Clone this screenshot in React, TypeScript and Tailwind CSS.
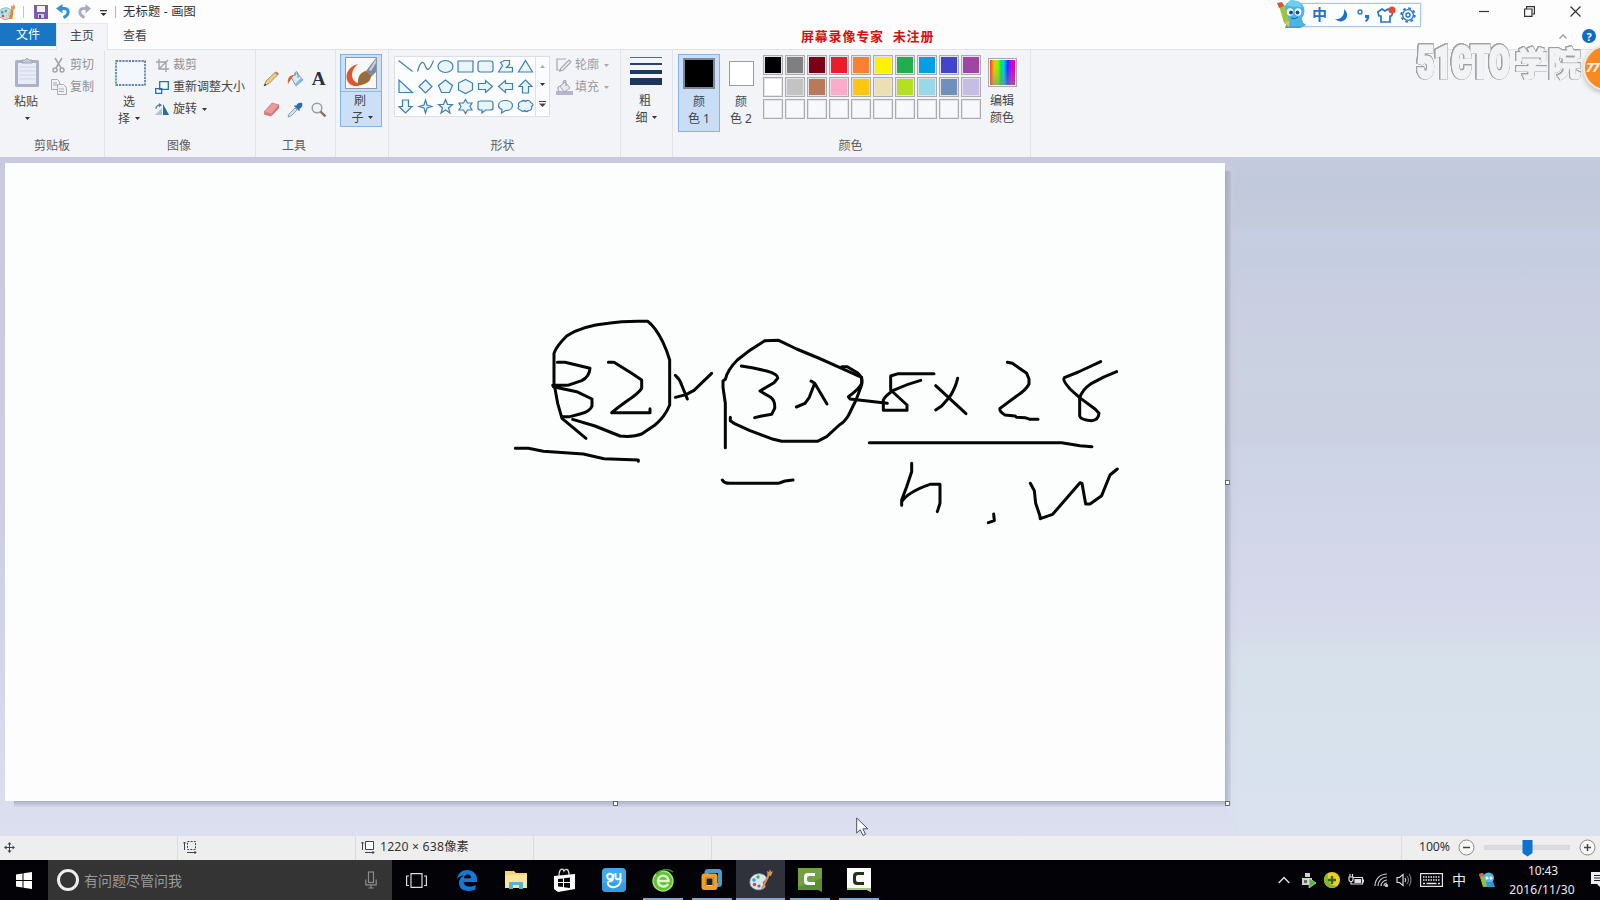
import type { ReactNode } from 'react';

const BLUE = '#3f7fae';

function Caret({ className = '', color = '#333' }: { className?: string; color?: string }) {
  return (
    <svg width="5" height="3" viewBox="0 0 5 3" className={`shrink-0 ${className}`}>
      <path d="M0 0h5L2.5 3z" fill={color} />
    </svg>
  );
}

function Group({ label, className, children, labelClass = '' }: { label: string; className: string; labelClass?: string; children?: ReactNode }) {
  return (
    <section className={`flex shrink-0 flex-col border-r border-[#e2e3e8] ${className}`}>
      <div className="flex h-[86px] items-start">{children}</div>
      <div className={`h-5 text-center leading-5 text-[#5c5c60] ${labelClass}`}>{label}</div>
    </section>
  );
}

function PaletteIcon({ size }: { size: number }) {
  return (
    <svg width={size} height={size} viewBox="0 0 24 24" className="shrink-0">
      <path d="M1 14C1 8 7 5 12 6c5 1 6 4 5 6-1 1-3 1-3 3s3 2 2 4c-2 3-8 4-12 1-2-1-3-3-3-6z" fill="#d9e6ee" stroke="#8fb0c2" strokeWidth=".8" />
      <circle cx="5" cy="12" r="1.8" fill="#3f9be0" />
      <circle cx="9" cy="9" r="1.7" fill="#4bb04f" />
      <circle cx="5.5" cy="16.500" r="1.8" fill="#d5453a" />
      <circle cx="10" cy="18" r="1.600" fill="#8854b5" />
      <path d="M12 21 19 6l2 1-7 14z" fill="#e08a3c" />
      <path d="M18.500 7 18 3l2 1 1-3 1 3 2-1-2 5z" fill="#c99b55" />
    </svg>
  );
}

function TitleBar() {
  return (
    <div className="flex h-[23px] items-center">
      <svg width="16" height="18" viewBox="2 0 22 23" className="shrink-0">
        <path d="M0 14C1 8 7 5 12 6c5 1 6 4 5 6-1 1-3 1-3 3s3 2 2 4c-2 3-8 4-12 1-2-1-4-3-4-6z" fill="#c6dde6" stroke="#6f9cb0" />
        <circle cx="5" cy="12" r="1.800" fill="#3f9be0" />
        <circle cx="10" cy="10" r="1.700" fill="#4bb04f" />
        <circle cx="6" cy="17" r="1.800" fill="#d5453a" />
        <path d="M14 21 18 6h3l-2 15z" fill="#e58a33" />
        <path d="M17 7V2l2 2 2-3 2 3-1 4z" fill="#d9a24f" />
      </svg>
      <div className="ml-[7px] h-3 w-px bg-[#c2c2c6]" />
      <svg width="14" height="14" viewBox="0 0 14 14" className="ml-[10px] shrink-0">
        <path d="M0 0h14v14H1l-1-1z" fill="#7a5da8" />
        <path d="M3 1h8v6H3z" fill="#f3f0f8" />
        <path d="M4 9h6v4H4z" fill="#d5cbe6" />
        <path d="M5 10h2v3H5z" fill="#5b4189" />
      </svg>
      <svg width="15" height="15" viewBox="0 0 15 15" className="ml-2 shrink-0" fill="none">
        <path d="M4 4.500h4.500c3 0 4 2 3.500 4.500-.4 2-2 3.500-4.500 4.500" stroke="#3a8fd0" strokeWidth="3.200" />
        <path d="M6.500 0 0 4.500 6.500 9.500z" fill="#3a8fd0" />
      </svg>
      <svg width="15" height="15" viewBox="0 0 15 15" className="ml-[6px] shrink-0" fill="none">
        <path d="M11 4.500H6.500C3.500 4.500 2.500 6.500 3 9c.4 2 2 3.500 4.500 4.500" stroke="#aaadbb" strokeWidth="3" />
        <path d="m8.500 0 5.500 4.500-5.500 5z" fill="#aaadbb" />
      </svg>
      <svg width="7" height="7" viewBox="0 0 7 7" className="ml-[8px] mt-1 shrink-0">
        <path d="M0 0h7v1.300H0zM.5 3h6L3.500 6z" fill="#333" />
      </svg>
      <div className="ml-[8px] h-3 w-px bg-[#b5b5b9]" />
      <span className="ml-[7px] mt-px whitespace-pre text-[12.3px] tracking-[0.15px] text-[#333]">无标题 - 画图</span>
      <div className="ml-auto flex items-center">
        <svg width="10" height="11" viewBox="0 0 10 11" className="mr-[35px]"><path d="M0 5.500h10" stroke="#333" strokeWidth="1.200" /></svg>
        <svg width="11" height="11" viewBox="0 0 11 11" className="mr-[35px]" fill="none" stroke="#333" strokeWidth="1.200">
          <path d="M.6 3h7.400v7.400H.6zM2.600 3V.6h7.800V8H8" />
        </svg>
        <svg width="11" height="11" viewBox="0 0 11 11" className="mr-[19px]" fill="none" stroke="#333" strokeWidth="1.200">
          <path d="m.5.5 10 10m0-10-10 10" />
        </svg>
      </div>
    </div>
  );
}

function Tabs() {
  return (
    <div className="flex h-[27px] border-b border-[#e1e2e6]">
      <div className="h-[23px] w-14 bg-[#1a75c4] text-center leading-[23px] text-white">文件</div>
      <div className="-mb-px flex w-[52px] justify-center border-x border-t border-[#e6e7ea] bg-[#f4f5f8] leading-[24px] text-[#444]">主页</div>
      <div className="w-[54px] text-center leading-[25px] text-[#444]">查看</div>
      <div className="ml-auto flex items-center">
        <svg width="8" height="5" viewBox="0 0 8 5" className="mr-[15px]" fill="none"><path d="M.5 4.500 4 1l3.500 3.500" stroke="#999" strokeWidth="1.300" /></svg>
        <div className="mr-1 flex size-[14px] items-center justify-center rounded-full bg-[#0f6cc0] text-[11px] font-bold leading-none text-white">?</div>
      </div>
    </div>
  );
}

function ClipboardGroup() {
  return (
    <Group label="剪贴板" className="w-[105px]">
      <div className="flex w-[51px] flex-col items-center pt-[7px] pl-[3px]">
        <svg width="26" height="32" viewBox="0 0 26 32">
          <rect x="1" y="3" width="24" height="27" rx="1.500" fill="#aab2cb" />
          <rect x="4" y="6" width="18" height="21" fill="#e6ebf6" />
          <path d="M5 10h16M5 14h16M5 18h16M5 22h16" stroke="#cfd7e8" />
          <path d="M8 6V3h3l2-2 2 2h3v3z" fill="#c6cad6" stroke="#8f96ab" strokeWidth=".8" />
        </svg>
        <span className="mt-1 mr-[2px] leading-[18px]">粘贴</span>
        <Caret className="mt-[6px]" />
      </div>
      <div className="flex flex-col pt-1 text-[#909094]">
        <div className="flex h-[22px] items-center">
          <svg width="16" height="16" viewBox="0 0 16 16" fill="none" stroke="#a1a4ae" strokeWidth="1.500" className="mr-[3px]">
            <path d="m4 1 6 10M11 1 5 11" /><circle cx="4" cy="13" r="2" /><circle cx="11" cy="13" r="2" />
          </svg>剪切
        </div>
        <div className="flex h-[22px] items-center">
          <svg width="16" height="16" viewBox="0 0 16 16" fill="#f0f1f5" stroke="#a9acb6" className="mr-[3px]">
            <path d="M.5.500h6l2 2v8h-8zM2 4h4M2 6h4" /><path d="M6.500 5.500h6l3 3v7h-9zM8 10h5M8 12.500h5" />
          </svg>复制
        </div>
      </div>
    </Group>
  );
}

function ImageGroup() {
  return (
    <Group label="图像" className="w-[151px]" labelClass="pr-[2px]">
      <div className="flex w-[50px] flex-col items-center pt-[10px]">
        <svg width="31" height="26" viewBox="0 0 31 26"><rect x="1" y="1" width="29" height="24" fill="#f2f7fc" stroke="#35669c" strokeWidth="1.400" strokeDasharray="2.200 1" /></svg>
        <span className="mt-2 mr-[2px] leading-4">选</span>
        <span className="mr-[2px] flex items-center gap-[5px] leading-[17px]">择<Caret /></span>
      </div>
      <div className="flex flex-col pt-1">
        <div className="flex h-[22px] items-center text-[#909094]">
          <svg width="13" height="13" viewBox="0 0 13 13" fill="none" stroke="#a1a4ae" strokeWidth="1.400" className="mr-1 ml-[1px]"><path d="M3 0v10h10M0 3h10v10M3 10l9-9" /></svg>裁剪
        </div>
        <div className="flex h-[22px] items-center">
          <svg width="14" height="13" viewBox="0 0 14 13" fill="#f4f8fc" stroke="#2d6da8" strokeWidth="1.300" className="mr-1"><path d="M4.700.7h8.600v7.600H4.700zM.7 7.700h6v4.600h-6z" /></svg>重新调整大小
        </div>
        <div className="flex h-[22px] items-center">
          <svg width="14" height="13" viewBox="0 0 14 13" className="mr-1"><path d="M8 1v11h6z" fill="#2a6ca6" /><path d="M7 5v7H0z" fill="#a9c5dc" /><path d="M1 6c0-3 2-4 4-4" fill="none" stroke="#4383b7" strokeWidth="1.300" /><path d="m4 0 3 2-3 2.500z" fill="#4383b7" /></svg>旋转<Caret className="ml-[5px]" />
        </div>
      </div>
    </Group>
  );
}

function ToolsGroup() {
  return (
    <Group label="工具" className="w-[80px]" labelClass="pr-[3px]">
      <div className="grid grid-cols-[24px_24px_24px] grid-rows-[31px_31px] place-items-center pt-[13px] pl-[3px]">
        <svg width="16" height="16" viewBox="0 0 16 16"><path d="m1 15 2-5L12 1.500l2.500 2.500L6 12.500z" fill="#e8cf80" stroke="#9b7b45" strokeWidth=".8" /><path d="m12 1.500 1.500-1L16 3l-1.500 1z" fill="#c46a63" /><path d="m1 15 1-2.500L3.500 14z" fill="#333" /></svg>
        <svg width="17" height="16" viewBox="0 0 17 16"><path d="m4 6 6-4 6 7-7 6z" fill="#dce8f3" stroke="#7f9db8" /><path d="M8 5c-1-5 3-6 3-1v3" fill="none" stroke="#6c88a2" /><path d="M1 13C0 8 2 4 7 4L4 8z" fill="#d9623b" /><path d="m9 15 7-6-2-2-6 6z" fill="#8bb7dd" /></svg>
        <span className="pr-px font-['Liberation_Serif',serif] text-[19px] font-bold leading-none text-[#243044]">A</span>
        <svg width="17" height="15" viewBox="0 0 17 15"><path d="M1 10 9 1l7 2-7 9z" fill="#eb9c9a" stroke="#c56a69" strokeWidth=".7" /><path d="m1 10 8 2-1 2.500-7-2z" fill="#d87c7a" /><path d="m9 12 7-9v3l-8 8.500z" fill="#c96967" /></svg>
        <svg width="16" height="16" viewBox="0 0 16 16"><path d="m1 15 1-3 6-6 2 2-6 6z" fill="#d5e2ee" stroke="#7890a6" strokeWidth=".8" /><path d="m7 4 5 5 1-1-1-1c3-1 4-4 3-6-2-1-5 0-6 3L8 3z" fill="#2d6cab" /></svg>
        <svg width="16" height="16" viewBox="0 0 16 16" fill="none"><circle cx="6" cy="6" r="4.800" fill="#edf3f8" stroke="#9c9da0" strokeWidth="1.500" /><path d="m9.500 9.500 5 5" stroke="#8b6f58" strokeWidth="2.400" /></svg>
      </div>
    </Group>
  );
}

function BrushGroup() {
  return (
    <Group label="" className="w-[53px]">
      <div className="mt-1 ml-[4px] flex h-[73px] w-[42px] flex-col items-center border border-[#7fb2e5] bg-[#cbdff6]">
        <div className="flex h-[37px] w-full justify-center border-b border-[#8dbbe8] pt-[2px]">
          <svg width="32" height="32" viewBox="0 0 32 32">
            <rect x=".5" y=".5" width="31" height="31" fill="#faf8f6" stroke="#8f99a5" />
            <path d="M13 7C4 9 0 17 2 23c2 6 10 8 16 4-6 0-11-3-11-9 0-4 2-8 6-11z" fill="#e0562b" />
            <path d="M21 14 31 1v14l-5 5z" fill="#7d8aa0" />
            <path d="m24 13 7-11v4l-5 8z" fill="#c8d0dc" />
            <path d="M13 28c-1-7 2-13 8-14l5 5c0 6-6 9-13 9z" fill="#9c6b3c" />
          </svg>
        </div>
        <span className="mt-[1px] mr-[2px] leading-4">刷</span>
        <span className="flex items-center gap-1 pl-[2px] leading-[17px]">子<Caret /></span>
      </div>
    </Group>
  );
}

const shapes = [
  'M1 2 15 13',
  'M0 13C3 2 6 2 8 8s5 2 8-6',
  'M8 2c4 0 7.500 2.500 7.500 6S12 14 8 14 .5 11.500.5 8 4 2 8 2z',
  'M.5 2.500h15v11H.5z',
  'M3 2.500h10q2.500 0 2.500 2.500v6q0 2.500-2.500 2.500H3Q.5 13.500.5 11V5Q.5 2.500 3 2.500z',
  'M1 13.500 5 7 3 4l4-2h5v4l-3 3h6v4.500z',
  'M8 2l7 11.500H1z',
  'M1.500 1.500V14H15z',
  'M8 1.500 14.500 8 8 14.500 1.500 8z',
  'M8 1.500 15 7l-3 7H4L1 7z',
  'M8 1l7 3.500v7L8 15l-7-3.500v-7z',
  'M1 5h7V2l7 6-7 6v-3H1z',
  'M15 5H8V2L1 8l7 6v-3h7z',
  'M5 14.500V8H1.500L8 1.500 14.500 8H11v6.500z',
  'M5 1.500V8H1.500L8 14.500 14.500 8H11V1.500z',
  'M8 1.500 9.500 6.500 14.500 8 9.500 9.500 8 14.500 6.500 9.500 1.500 8 6.500 6.500z',
  'm8 1 2 5h5l-4 3.500 1.500 5L8 11.500l-4.500 3L5 9.500 1 6h5z',
  'M8 1l2 3.500h4.500L12.500 8l2 3.500H10L8 15l-2-3.500H1.500L3.500 8l-2-3.500H6z',
  'M3 2.500h10q2.500 0 2.500 2v5q0 2-2.500 2H8l-3.500 3v-3H3q-2.500 0-2.500-2v-5q0-2 2.500-2z',
  'M8 2c4 0 7 2 7 5s-3 5-7 5l-4 2.500.5-3.500C2 10 1 9 1 7c0-3 3-5 7-5z',
  'M4 3c2-2 3-1 4 0 2-2 5-1 5 1 3 1 3 3 1 4 1 3-1 4-3 4-2 2-3 1-4 0-2 2-3 0-4-.500C0 11 0 9 1.500 8 0 6 1 3.500 4 3z',
];

function ShapesGroup() {
  return (
    <Group label="形状" className="w-[232px]" labelClass="pr-[4px]">
      <div className="mt-[6px] ml-[5px] flex h-[61px] w-[156px] border border-[#dcdee4] bg-[#fbfcfe]">
        <div className="grid w-[140px] grid-cols-7 grid-rows-3 place-items-center">
          {shapes.map((d) => (
            <svg key={d} width="17" height="17" viewBox="-.5 -.5 17 17" fill={d.startsWith('M1 2 15') || d.startsWith('M0 13') ? 'none' : '#e9f4fb'} stroke={BLUE} strokeWidth="1.200"><path d={d} /></svg>
          ))}
        </div>
        <div className="flex flex-1 flex-col items-center justify-around border-l border-[#dfe1e6]">
          <svg width="5" height="3" viewBox="0 0 5 3"><path d="M0 3h5L2.500 0z" fill="#aaa" /></svg>
          <Caret />
          <svg width="7" height="7" viewBox="0 0 7 7"><path d="M0 0h7v1H0zM0 2.500h7L3.500 6z" fill="#444" /></svg>
        </div>
      </div>
      <div className="flex flex-col pt-1 pl-[6px] text-[#9b9ba0]">
        <div className="flex h-[22px] items-center">
          <svg width="16" height="14" viewBox="0 0 16 14" fill="none" stroke="#a3a6b0" strokeWidth="1.200" className="mr-[3px]"><path d="M10 1H1v11h4M4 13l1-3 8-8 2 2-8 8z" /></svg>轮廓<Caret className="ml-[5px]" color="#aaa" />
        </div>
        <div className="flex h-[22px] items-center">
          <svg width="17" height="15" viewBox="0 0 17 15" className="mr-[2px]"><path d="M0 11h17v4H0z" fill="#b3b2d0" /><path d="m4 6 5-4 5 6-6 4z" fill="#e6e7f0" stroke="#a3a6b8" /><path d="M7 4c0-4 3-5 3-1v3M3 11c-2-2-1-5 2-5" fill="none" stroke="#a3a6b8" strokeWidth="1.200" /></svg>填充<Caret className="ml-[5px]" color="#aaa" />
        </div>
      </div>
    </Group>
  );
}

const palette = [
  ['#000000', '#7f7f7f', '#7d0019', '#ec1c2c', '#fb8131', '#fbf200', '#24ad4e', '#059de3', '#4145c9', '#a045a3'],
  ['#ffffff', '#c3c3c3', '#b87a5a', '#fcacc9', '#fdc611', '#ecdfb2', '#b4e01f', '#99d8e8', '#7090bb', '#c6bde4'],
  Array.from({ length: 10 }, () => ''),
];

function ColorsGroup() {
  return (
    <Group label="颜色" className="w-[358px]" labelClass="pr-[2px]">
      <div className="mt-1 ml-[5px] flex h-[78px] w-[42px] flex-col items-center border border-[#84b5e6] bg-[#c9ddf6] pt-[3px]">
        <div className="h-[31px] w-8 border-2 border-[#7a8898] bg-black" />
        <span className="mt-[5px] leading-4">颜</span>
        <span className="leading-[17px]">色 1</span>
      </div>
      <div className="flex w-[42px] flex-col items-center pt-[11px]">
        <div className="size-[25px] border border-[#9b9b9f] bg-white" />
        <span className="mt-2 leading-4">颜</span>
        <span className="leading-[17px]">色 2</span>
      </div>
      <div className="mt-[5px] ml-[1px] grid grid-cols-[repeat(10,20px)] gap-[2px]">
        {palette.flat().map((c, i) => (
          <div key={i} className="h-5 border border-[#acacb0] bg-[#e4e4e8] p-px">
            <div className="size-full" style={{ backgroundColor: c || '#f7f8fb' }} />
          </div>
        ))}
      </div>
      <div className="ml-[6px] flex w-[30px] flex-col items-center pt-2">
        <div className="size-[29px] border border-[#a9a9ad] bg-white p-px">
          <div className="size-full bg-[linear-gradient(to_bottom,transparent_30%,#8888),linear-gradient(to_right,#f33,#fb0_15%,#7f0_32%,#0d6_45%,#0cf_55%,#23f_70%,#c0f_85%,#f06)]" />
        </div>
        <span className="mt-[6px] whitespace-nowrap leading-4">编辑</span>
        <span className="whitespace-nowrap leading-[17px]">颜色</span>
      </div>
    </Group>
  );
}

function Ribbon() {
  return (
    <div className="flex h-[107px] bg-[#f3f4f8] text-[#444]">
      <ClipboardGroup />
      <ImageGroup />
      <ToolsGroup />
      <BrushGroup />
      <ShapesGroup />
      <Group label="" className="w-[52px]">
        <div className="flex w-[50px] flex-col items-center pt-[7px]">
          <div className="flex w-8 flex-col">
            <div className="h-px bg-[#5a6a85]" />
            <div className="mt-[5px] h-[2px] bg-[#2b4268]" />
            <div className="mt-[5px] h-1 bg-[#1f3860]" />
            <div className="mt-1 h-[7px] bg-[#1c355e]" />
          </div>
          <span className="mt-2 mr-[2px] leading-4">粗</span>
          <span className="flex items-center gap-1 leading-[17px]">细<Caret /></span>
        </div>
      </Group>
      <ColorsGroup />
    </div>
  );
}

function Handle({ className }: { className: string }) {
  return <div className={`absolute h-[5px] w-[5px] border border-[#5b6377] bg-white ${className}`} />;
}

function Workspace() {
  return (
    <div className="h-[678px] bg-[linear-gradient(to_bottom,#c3cadd_0%,#c1c9dc_5%,#c4cbdb_10%,#c6cfe1_11%,#c5cee1_16%,#c9cee1_18%,#cbcfe1_26%,#cad2e2_27%,#ccd1e1_42%,#cdd4e6_43%,#d3d7e9_60%,#d7daeb_70%,#d6dfea_72%,#d7e1ec_76%,#d9e2ee_100%)]">
      <div className="h-full w-[1238px] bg-[linear-gradient(to_bottom,#c8c9dc,#cccde1_50%,#dbdfef)] pt-[6px] pl-[5px] [mask-image:linear-gradient(to_right,#000_1228px,transparent)]">
        <div className="relative h-[638px] w-[1220px] bg-[linear-gradient(to_bottom,#fbfefd_70%,#fefdfe_76%)]">
          <svg width="1220" height="638" viewBox="5 163 1220 638" fill="none" stroke="#050505" strokeWidth="9" strokeLinecap="round" strokeLinejoin="round">
            <g transform="translate(500 300) scale(.33333)">
              <path d="M258 415 186 355 173 310 162 250V160Q168 140 200 108 245 78 325 70 370 62 443 64 465 80 488 125 500 150 509 180V315Q495 350 465 375L425 402Q400 412 360 408 320 392 285 378L218 358" />
              <path d="M172 187H195L270 205Q268 230 245 242L203 256H158M160 260 230 275 276 297V318Q270 335 240 342L210 350H186" />
              <path d="M325 187H342L395 220 425 240V265Q415 280 385 300 350 325 335 338H450V326" />
              <path d="M526 226Q540 238 545 255L562 297M526 292 558 284 582 271 635 220" />
              <path d="M676 443V310L669 262V243L676 238Q682 210 712 180 750 148 795 122L836 121 890 147Q960 175 1020 203L1085 232V255L1068 300 1046 345Q1035 365 1018 375L980 410 952 424H845L820 418 750 392 702 370 691 362V352" />
              <path d="M724 198 760 204 800 213Q835 222 833 235L822 248 780 273 812 292Q826 302 824 325L815 343 785 348 764 353" />
              <path d="M933 243 944 250 928 292 915 310 889 321M944 250 981 312" />
              <path d="M46 445H85L130 454 250 462 312 476 415 480V484M667 540Q672 550 690 550H835L855 543 879 540" />
            </g>
            <g transform="translate(830 340) scale(.33333)">
              <path d="M35 80H52L82 98Q98 112 96 128 90 145 55 170L60 177 172 190" />
              <path d="M312 101H205L182 108V150L231 195V211H160V180Q165 168 188 152 230 132 272 121" />
              <path d="M383 115Q376 145 358 172L335 198 317 210M317 137 408 221" />
              <path d="M532 67 547 70 590 100 597 117V132Q588 150 560 168L510 205Q507 215 525 225L555 228 560 232 585 233 600 238H624" />
              <path d="M812 65 745 96 703 113Q696 120 720 147L748 172 795 207 807 220Q805 240 785 242 752 240 749 228V175Q755 150 785 130 820 110 860 95" />
              <path d="M118 308H695L750 317 786 320" />
              <path d="M245 370V395L230 440 215 480V496M215 485Q235 455 300 433H330V490L322 515" />
              <path d="M491 522 493 542 475 548M601 430 613 452 617 490 629 525 631 536 668 523 750 428 756 430 767 492H780L815 467 840 405 862 387" />
            </g>
          </svg>
          <div className="absolute top-2 left-full h-[635px] w-[6px] bg-linear-to-r from-[#687290]/35 to-[#687290]/15" />
          <div className="absolute top-full left-[9px] h-[6px] w-[1211px] bg-linear-to-b from-[#606a8c]/40 to-[#606a8c]/5" />
          <Handle className="top-[317px] left-full" />
          <Handle className="top-full left-full" />
          <Handle className="top-full left-[608px]" />
        </div>
      </div>
    </div>
  );
}

function StatusBar() {
  return (
    <div className="flex h-[25px] border-t border-[#e0e0e6] bg-[#eeeeef] text-[#333]">
      <div className="flex w-[178px] items-center border-r border-[#dcdcde] pb-px pl-1">
        <svg width="11" height="11" viewBox="0 0 11 11"><path d="M5.500 1v9M1 5.500h9" stroke="#3b4358" /><path d="M5.500 0l2 2.500h-4zM5.500 11l2-2.500h-4zM0 5.500l2.500-2v4zM11 5.500l-2.500-2v4z" fill="#3b4358" /></svg>
      </div>
      <div className="flex w-[178px] items-center border-r border-[#dcdcde] pb-px pl-[5px]">
        <svg width="14" height="13" viewBox="0 0 14 13" fill="none" stroke="#3b4358"><path d="M1.500 1v8M0 2.500 1.500 1 3 2.500M4 11.500h9M11.500 10l1.500 1.500-1.500 1.500" /><path d="M4.500.500h8v8h-8z" strokeDasharray="2 1.200" /></svg>
      </div>
      <div className="flex w-[178px] items-center border-r border-[#dcdcde] pb-px pl-[5px]">
        <svg width="14" height="13" viewBox="0 0 14 13" fill="none" stroke="#3b4358"><path d="M1.500 1v8M0 2.500 1.500 1 3 2.500M4 11.500h9M11.500 10l1.500 1.500-1.500 1.500" /><path d="M4.500.500h8v8h-8z" fill="#fff" /></svg>
        <span className="ml-[5px] text-[12.3px] tracking-[0.15px]">1220 × 638像素</span>
      </div>
      <div className="w-[178px] border-r border-[#dcdcde]" />
      <div className="flex flex-1 items-center border-r border-[#dcdcde]" />
      <div className="flex w-[198px] items-center pb-px pl-[17px]">
        <span className="w-[33px] text-[12.3px] tracking-[-0.1px]">100%</span>
        <svg width="17" height="17" viewBox="0 0 17 17" className="ml-[6px]" fill="#f8f8f8" stroke="#888"><circle cx="8.500" cy="8.500" r="7.500" /><path d="M5 8.500h7" stroke="#444" strokeWidth="1.500" /></svg>
        <svg width="86" height="18" viewBox="0 0 86 18" className="ml-[9px]"><path d="M0 6.500h86v4H0z" fill="#dcdcde" stroke="#cfcfd2" strokeWidth=".6" /><path d="M38.500 1h10v13l-5 3.500-5-3.500z" fill="#0d74cd" /></svg>
        <svg width="17" height="17" viewBox="0 0 17 17" className="ml-[9px]" fill="#f8f8f8" stroke="#888"><circle cx="8.500" cy="8.500" r="7.500" /><path d="M5 8.500h7M8.500 5v7" stroke="#444" strokeWidth="1.500" /></svg>
      </div>
    </div>
  );
}

function Task({ children, running = false, active = false }: { children: ReactNode; running?: boolean; active?: boolean }) {
  return (
    <div className={`flex w-[49px] flex-col items-center ${active ? 'bg-[#30323b]' : ''}`}>
      <div className="flex h-[37px] items-center pt-[3px]">{children}</div>
      {running && <div className={`mt-auto h-[2px] bg-[#76a9dc] ${active ? 'w-full' : 'w-10'}`} />}
    </div>
  );
}

function Taskbar() {
  return (
    <div className="flex h-10 bg-[#020207] text-[#eee]">
      <div className="flex w-12 items-center justify-center">
        <svg width="16" height="17" viewBox="0 0 16 17" fill="#fff"><path d="M0 2.500 6.500 1.500V8H0zM7.500 1.300 16 0v8H7.500zM0 9h6.500v6.500L0 14.500zM7.500 9H16v8l-8.500-1.300z" /></svg>
      </div>
      <div className="flex w-[344px] items-center bg-[#343434] pl-[9px]">
        <div className="size-[22px] rounded-full border-[3px] border-[#eee]" />
        <span className="ml-[5px] text-[14px] text-[#9a9a9a]">有问题尽管问我</span>
        <svg width="12" height="18" viewBox="0 0 12 18" className="mr-[15px] ml-auto" fill="none" stroke="#8c8c8c" strokeWidth="1.200"><rect x="3.500" y="1" width="5" height="10.500" /><path d="M.8 8.500v5.300h10.400V8.500M6 14v3M3.500 17h5" /></svg>
      </div>
      <div className="flex pl-px">
        <Task>
          <svg width="21" height="15" viewBox="0 0 21 15" fill="none" stroke="#ddd" strokeWidth="1.200" className="mr-[2px]"><path d="M5 .6h11v13.800H5zM3 3H.6v9.500H3M18 3h2.400v9.500H18" /></svg>
        </Task>
        <Task>
          <svg width="20" height="21" viewBox="0 0 20 21"><path d="M0 9C1 3 5 0 10 0c6 0 10 4 10 9v3H6.500c.4 3 3 4.500 6 4.500 2.400 0 4-.5 6-1.500v4.200c-2 1.200-4.500 1.800-7.500 1.800-5.500 0-9-3.300-9-8.200C2 9.500 4 7 7 5.500 4.500 5.500 1.800 6.500 0 9zm6.800-.7H14C14 6 12.800 4.600 10.700 4.600 8.600 4.600 7 6 6.800 8.300z" fill="#1478d4" /></svg>
        </Task>
        <Task>
          <svg width="22" height="18" viewBox="0 0 22 18"><path d="M0 0h9l2 2h11v15H0z" fill="#f3d67a" /><path d="M0 4h22v13H0z" fill="#fae59c" /><path d="M4 18v-7h14v7h-4v-4H8v4z" fill="#58b3d1" /></svg>
        </Task>
        <Task>
          <svg width="21" height="24" viewBox="0 0 21 24"><path d="M0 8l21-2v15l-17 3-4-3z" fill="#fff" /><path d="M5 8C5 0 9 0 10 3c2-3 5-2 5 4" fill="none" stroke="#ddd" strokeWidth="1.300" /><path d="m4 11 5-.6V14H4zM10 10.300l6-.7V14h-6zM4 15h5v4l-5-.5zM10 15h6v5l-6-.8z" fill="#050508" /></svg>
        </Task>
        <Task>
          <svg width="24" height="24" viewBox="0 0 24 24"><rect width="24" height="24" rx="4" fill="#43a9ee" /><path d="M0 15h24v5a4 4 0 0 1-4 4H4a4 4 0 0 1-4-4z" fill="#278ed9" opacity=".5" /><g fill="none" stroke="#fff" strokeWidth="1.900"><circle cx="8" cy="8.500" r="2.800" /><path d="M10.800 6v5c0 2-2 2-4 2.500-3 2.500 1 6.500 6 5.500 4-1 6-4 6-8M13.500 5v4c0 3 5 3 5 0V5" /></g></svg>
        </Task>
        <Task running>
          <svg width="22" height="23" viewBox="0 0 22 23"><circle cx="11" cy="12" r="10" fill="#5fc32f" stroke="#a4e57f" strokeWidth="1.400" /><path d="M6 12h10.500C16 5 6 5 6 12c0 6 8 7 10 3" fill="none" stroke="#dff5cd" strokeWidth="2.500" /><path d="M4 5C10-1 17 0 21 3" fill="none" stroke="#3b8d21" strokeWidth="1.500" /></svg>
        </Task>
        <Task running>
          <svg width="21" height="22" viewBox="0 0 21 22" fill="none"><rect x="5.500" y="2" width="13.500" height="14" rx="1.500" stroke="#4b9fc7" strokeWidth="4" /><rect x="2.500" y="6.500" width="12" height="12.500" rx="1" fill="#1d2027" stroke="#ef9f2b" strokeWidth="4" /><path d="M5 9h7v7.500H5z" stroke="#f5c661" /></svg>
        </Task>
        <Task running active><PaletteIcon size={24} /></Task>
        <Task running>
          <svg width="24" height="24" viewBox="0 0 24 24"><path d="M0 0h24v24l-4-2H0z" fill="#5d8f2c" /><path d="M0 0h24v10L0 19z" fill="#82ab52" opacity=".6" /><path d="M17 5H10Q6 5 6 9v4q0 4 4 4h7v-3h-6q-2 0-2-2v-2q0-2 2-2h6z" fill="#fff" /></svg>
        </Task>
        <Task running>
          <svg width="24" height="24" viewBox="0 0 24 24"><path d="M0 0h24v24l-4-2H0z" fill="#fff" /><path d="M0 20h24v4l-4-2H0z" fill="#a9c589" /><path d="M17 4H10Q6 4 6 8v5q0 4 4 4h7v-3h-6q-2 0-2-2V9q0-2 2-2h6z" fill="#263416" /></svg>
        </Task>
      </div>
      <div className="ml-auto flex items-center">
        <div className="flex w-6 justify-center"><svg width="12" height="8" viewBox="0 0 12 8" fill="none"><path d="m.7 7 5.300-5.500L11.300 7" stroke="#ddd" strokeWidth="1.500" /></svg></div>
        <div className="flex w-6 justify-center"><svg width="15" height="15" viewBox="0 0 15 15"><path d="M4 0h5v4H4zM1 5h10v7H1z" fill="#cfcfcf" /><path d="M3 7h3v3H3z" fill="#666" /><path d="m8 5 7 5-7 5z" fill="#53b648" stroke="#e9f5e7" strokeWidth=".6" /></svg></div>
        <div className="flex w-6 justify-center"><svg width="16" height="16" viewBox="0 0 16 16"><circle cx="8" cy="8" r="8" fill="#efce23" /><path d="M0 8a8 8 0 0 0 13 6C6 14 3 9 4 1a8 8 0 0 0-4 7z" fill="#7db82e" /><path d="M8 4v8M4 8h8" stroke="#33651d" strokeWidth="2.300" /></svg></div>
        <div className="flex w-[25px] justify-center"><svg width="16" height="13" viewBox="0 0 16 13" className="mr-[2px]" fill="none" stroke="#ddd" strokeWidth="1.200"><path d="M5 3.500h9.500V10H5M15.500 5.500v3M1 3h4v3L4 7.500H2L1 6zM2 3V0M4.500 3V0M3 7.500V10h3" /><path d="M7 5.500h5.500v3H7z" fill="#ddd" /></svg></div>
        <div className="flex w-6 justify-center"><svg width="14" height="14" viewBox="0 0 14 14" fill="none" stroke="#c8c8c8" strokeWidth="1.200"><path d="M1 13C1 6 6 1 13 1M4 13c0-5 4-9 9-9M7 13c0-3 3-6 6-6M10 13c0-2 1-3 3-3" /><circle cx="12.500" cy="12.500" r="1" fill="#fff" /></svg></div>
        <div className="flex w-[23px] justify-center"><svg width="16" height="14" viewBox="0 0 16 14" className="mr-[2px]" fill="none" stroke="#ddd" strokeWidth="1.200"><path d="M1 4.500h2.500L7 1.500v11L3.500 9.500H1zM9 5q1.500 2 0 4" /><path d="M11 3q3 4 0 8M13 1q4 6 0 12" stroke="#777" /></svg></div>
        <div className="flex w-[30px] justify-center"><svg width="23" height="14" viewBox="0 0 23 14" fill="none" stroke="#e6e6e6"><rect x=".6" y=".6" width="21.800" height="12.800" strokeWidth="1.200" /><path d="M3 4h17M3 7h17" strokeWidth="1.500" strokeDasharray="1.500 1" /><path d="M3 10.500h2M6.500 10.500h10M18 10.500h2" strokeWidth="1.300" /></svg></div>
        <span className="w-[26px] text-center text-[14px] leading-[18px]">中</span>
        <div className="flex w-[30px] justify-center"><svg width="16" height="16" viewBox="0 0 16 16"><circle cx="9.500" cy="6" r="5.500" fill="#55b9e5" /><path d="m5 10 9 0 2 5H5z" fill="#2d98d4" /><path d="m0 2 4-1 4 13-4 1z" fill="#95bd42" /><path d="m0 2 4-1 1 3-4 1z" fill="#e45b47" /><circle cx="8" cy="6" r="1.500" fill="#fff" /><circle cx="12" cy="6" r="1.500" fill="#fff" /></svg></div>
        <div className="flex w-[82px] flex-col items-center text-[12px] leading-[19px]"><span className="tracking-[-0.1px]">10:43</span><span className="pr-[2px] tracking-[0.15px]">2016/11/30</span></div>
        <div className="w-4 overflow-hidden pl-[7px]"><svg width="18" height="16" viewBox="0 0 18 16"><path d="M0 0h18v12h-8v4l-4-4H0z" fill="#eee" /><path d="M3 3.500h12M3 6h12M3 8.500h12" stroke="#222" /></svg></div>
      </div>
    </div>
  );
}

function InputBar() {
  return (
    <div className="absolute top-0 left-[1277px] flex h-[30px] w-[145px] items-start">
      <svg width="30" height="29" viewBox="0 0 30 29" className="z-10 shrink-0">
        <path d="M10 22h15l4 3-6 3H8z" fill="#3d9fdf" />
        <path d="M10 16h14l3 10H9z" fill="#4bb5e8" />
        <circle cx="17" cy="11" r="10.500" fill="#4bb5e8" />
        <path d="M10 6C12-2 16 0 18 1c4-1 6 3 7 6" fill="#6fcdf2" />
        <ellipse cx="13" cy="12" rx="3.300" ry="3.800" fill="#fff" /><ellipse cx="21" cy="12" rx="3.300" ry="3.800" fill="#fff" />
        <circle cx="14" cy="12.500" r="1.900" fill="#164c86" /><circle cx="20.500" cy="12.500" r="1.900" fill="#164c86" />
        <path d="M14 18q4 2 7-1" fill="none" stroke="#17629a" />
        <path d="m2 6 5-2 6 19-1 4-5-4z" fill="#9bc53a" /><path d="m0 3 5-1 2 4-5 2z" fill="#e44b3d" /><path d="m7 22 5-1v6z" fill="#e9b873" />
      </svg>
      <div className="mt-[3px] -ml-4 flex h-6 w-[130px] items-center border border-[#a9c5ec] bg-[#fcfdff] pl-5 shadow-[0_0_2px_#c9d9f2]">
        <span className="pb-px text-[15px] font-bold leading-none text-[#2474c6]">中</span>
        <svg width="13" height="13" viewBox="0 0 13 13" className="ml-[8px]"><path d="M9 0c8 7-1 17-9 10 6 1 10-4 9-10z" fill="#1d70c9" /></svg>
        <svg width="13" height="13" viewBox="0 0 13 13" className="ml-[9px]"><circle cx="3" cy="3" r="2" fill="none" stroke="#2474c6" strokeWidth="1.400" /><path d="M8 6h4c1 3-1 6-3 7l-1-1 2-3H8z" fill="#2474c6" /></svg>
        <svg width="19" height="18" viewBox="0 0 19 18" className="ml-[7px]"><path d="m5 3 3 2 3-2 5 3-1.500 4H13v6H4v-6H2L.8 6z" fill="#fff" stroke="#2474c6" strokeWidth="1.700" /><circle cx="15" cy="4" r="3.500" fill="#e54a35" /></svg>
        <svg width="16" height="16" viewBox="0 0 16 16" className="ml-1" fill="none" stroke="#2877c8"><circle cx="8" cy="8" r="6.800" strokeWidth="1.800" strokeDasharray="2.700 2.640" /><circle cx="8" cy="8" r="5.400" strokeWidth="1.400" /><circle cx="8" cy="8" r="2" strokeWidth="1.500" /></svg>
      </div>
    </div>
  );
}

export default function App() {
  return (
    <div className="relative h-[900px] w-[1600px] overflow-hidden bg-[#fdfdfd] font-['Noto_Sans','Noto_Sans_CJK_SC',sans-serif] text-[12px]">
      <TitleBar />
      <Tabs />
      <Ribbon />
      <Workspace />
      <StatusBar />
      <Taskbar />

      <InputBar />
      <div className="absolute top-[27px] left-[801px] whitespace-pre font-['Noto_Sans_CJK_SC',sans-serif] text-[13px] font-bold leading-[18px] tracking-[0.8px] text-[#d40f12]">屏幕录像专家<span className="ml-[9px]">未注册</span></div>
      <svg
        width="175"
        height="44"
        viewBox="1412 42 175 44"
        className="absolute top-[42px] left-[1412px] overflow-visible [filter:drop-shadow(0.7px_0_0_#a0a0a4)_drop-shadow(-0.7px_0_0_#a0a0a4)_drop-shadow(0_0.6px_0_#a0a0a4)_drop-shadow(0_-0.6px_0_#a0a0a4)]"
        fill="#f2f3f5"
        stroke="#f2f3f5"
        fontWeight="900"
      >
        <text x="1417" y="78" fontSize="44" textLength="93" strokeWidth="3" lengthAdjust="spacingAndGlyphs" fontFamily="Roboto, sans-serif">51CTO</text>
        <text x="1515" y="76" fontSize="33" textLength="66" strokeWidth="1" lengthAdjust="spacingAndGlyphs" fontFamily="'Noto Sans CJK SC', sans-serif">学院</text>
      </svg>
      <div className="absolute top-[45px] left-[1583px] flex size-[46px] items-center rounded-full border-2 border-[#f3e7dc] bg-[#fa8a1e] pl-px text-[13px] font-bold italic tracking-[-0.8px] text-white shadow-[0_2px_5px_#8888]">77</div>
      <svg width="13" height="20" viewBox="0 0 13 20" className="absolute top-[817px] left-[856px]"><path d="M.7 1v15l3.500-3.300L7 18.500l2.500-1.200-2.600-5.500h5z" fill="#fff" stroke="#4a5068" /></svg>
    </div>
  );
}
